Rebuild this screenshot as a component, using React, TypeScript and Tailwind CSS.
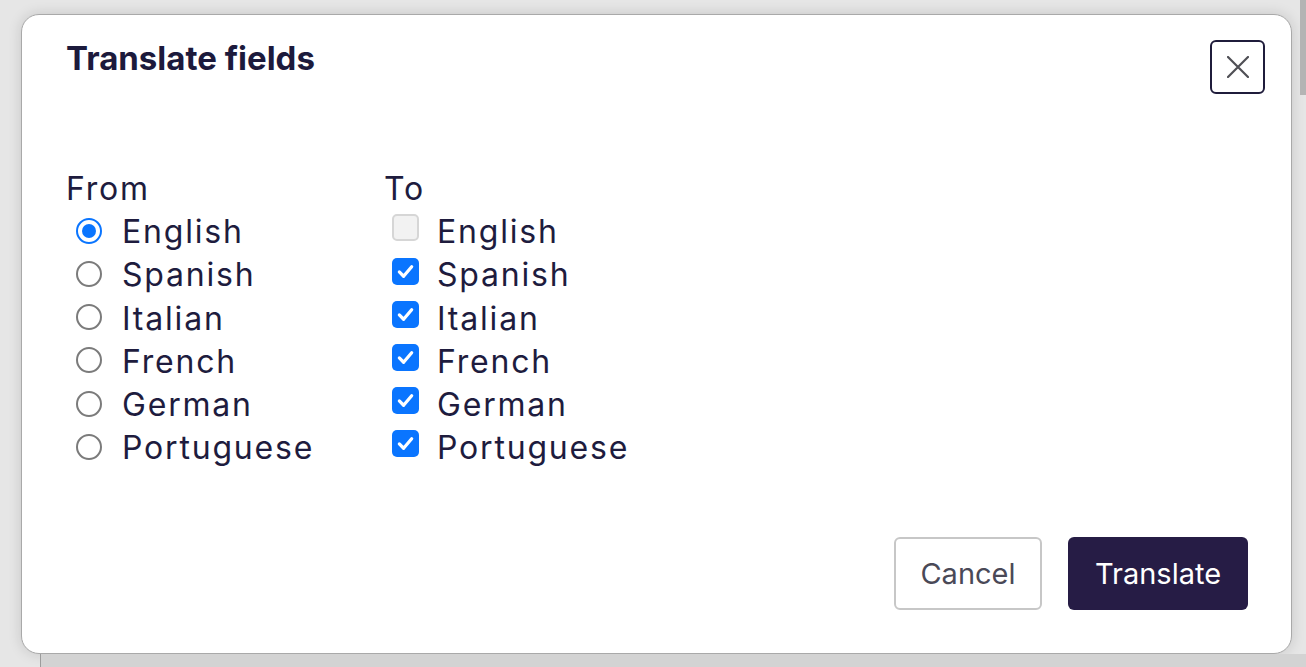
import React from "react";

const langs = ["English", "Spanish", "Italian", "French", "German", "Portuguese"];

const Radio = ({ checked }: { checked: boolean }) =>
  checked ? (
    <span className="-mt-[2px] ml-[10px] flex h-[26px] w-[26px] shrink-0 items-center justify-center rounded-full border-[2px] border-[#0a75ff] bg-white">
      <span className="h-[14px] w-[14px] rounded-full bg-[#0a75ff]" />
    </span>
  ) : (
    <span className="-mt-[2px] ml-[10px] h-[26px] w-[26px] shrink-0 rounded-full border-[2px] border-[#7b7b7b] bg-white" />
  );

const Check = ({ checked, disabled }: { checked: boolean; disabled?: boolean }) =>
  checked ? (
    <span className="ml-[8px] flex h-[27px] w-[27px] shrink-0 items-center justify-center rounded-[5px] bg-[#0a75ff]">
      <svg width="19" height="19" viewBox="0 0 20 20" fill="none">
        <path d="M3.5 10.5 L8 15 L16.5 5" stroke="white" strokeWidth="3.4" strokeLinecap="round" strokeLinejoin="round" />
      </svg>
    </span>
  ) : (
    <span
      className={
        disabled
          ? "ml-[8px] h-[27px] w-[27px] shrink-0 rounded-[5px] border-[2px] border-[#d6d6d6] bg-[#f2f2f2]"
          : "ml-[8px] h-[27px] w-[27px] shrink-0 rounded-[5px] border-[2px] border-[#7b7b7b] bg-white"
      }
    />
  );

export default function App() {
  return (
    <div className="relative h-[667px] w-[1306px] overflow-hidden bg-[#e6e6e6] font-['Inter',sans-serif] text-[#1e1c3e]">
      <div className="absolute right-0 top-0 h-[95px] w-[6px] bg-[#b4b4b4]" />
      <div className="pl-[21px] pt-[14px]">
        <div className="flex h-[640px] w-[1271px] flex-col rounded-[18px] border border-[#a9a9a9] bg-white shadow-[0_0_14px_rgba(0,0,0,0.14)]">
          <div className="flex items-start justify-between pl-[44px] pr-[26px] pt-[25px]">
            <h1 className="text-[33px] font-bold leading-[36px] text-[#1c1a3c]">Translate fields</h1>
            <button className="flex h-[54px] w-[55px] items-center justify-center rounded-[6px] border-[2px] border-[#1f1c3b] bg-white">
              <svg width="22" height="22" viewBox="0 0 22 22" fill="none">
                <path d="M1 1 L21 21 M21 1 L1 21" stroke="#4f4f55" strokeWidth="2.2" strokeLinecap="round" />
              </svg>
            </button>
          </div>

          <div className="mt-[73px] flex pl-[44px] text-[32px] leading-[43.2px] tracking-[1.8px]">
            <div className="w-[318px]">
              <div>From</div>
              {langs.map((l, i) => (
                <div key={l} className="flex items-center gap-[20px]">
                  <Radio checked={i === 0} />
                  <span>{l}</span>
                </div>
              ))}
            </div>
            <div>
              <div>To</div>
              {langs.map((l, i) => (
                <div key={l} className="flex items-center gap-[18px]">
                  <span className="-mt-[8px] flex">
                    <Check checked={i !== 0} disabled={i === 0} />
                  </span>
                  <span>{l}</span>
                </div>
              ))}
            </div>
          </div>

          <div className="mt-auto flex justify-end gap-[26px] pb-[43px] pr-[43px]">
            <button className="h-[73px] w-[148px] rounded-[6px] border-[2px] border-[#c7c7c7] bg-white text-[29px] text-[#4a4957]">
              Cancel
            </button>
            <button className="h-[73px] w-[180px] rounded-[6px] bg-[#261c45] text-[29px] text-white">
              Translate
            </button>
          </div>
        </div>
      </div>
      <div className="ml-[40px] h-[20px] border-l border-[#9c9c9c] bg-[#d3d3d3]" />
    </div>
  );
}
